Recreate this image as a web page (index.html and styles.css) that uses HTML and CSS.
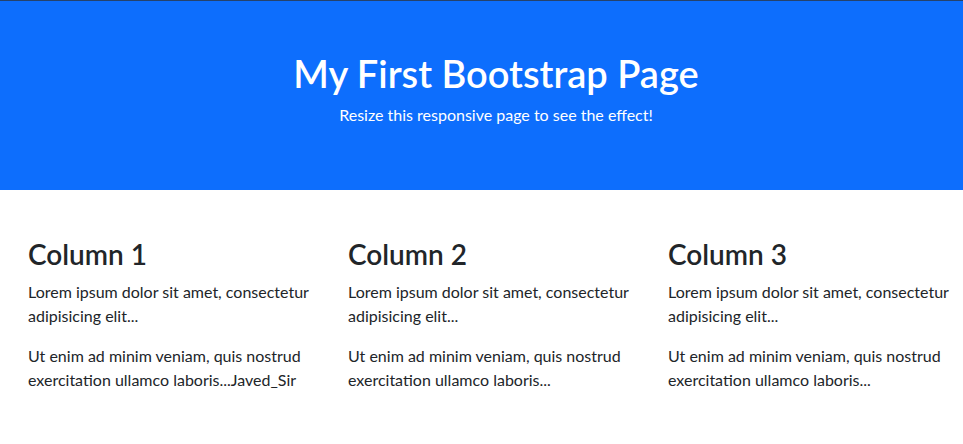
FILE: index.html
```html
<!DOCTYPE html>
<html lang="en">
<head>
<meta charset="utf-8">
<title>My First Bootstrap Page</title>
<link rel="stylesheet" href="styles.css">
</head>
<body>
<div class="page">
  <header class="hero">
    <h1 class="hero-title">My First Bootstrap Page</h1>
    <p class="hero-lead">Resize this responsive page to see the effect!</p>
  </header>
  <main class="container">
    <div class="row">
      <section class="col">
        <h3 class="col-title">Column 1</h3>
        <p>Lorem ipsum dolor sit amet, consectetur adipisicing elit...</p>
        <p>Ut enim ad minim veniam, quis nostrud exercitation ullamco laboris...Javed_Sir</p>
      </section>
      <section class="col">
        <h3 class="col-title">Column 2</h3>
        <p>Lorem ipsum dolor sit amet, consectetur adipisicing elit...</p>
        <p>Ut enim ad minim veniam, quis nostrud exercitation ullamco laboris...</p>
      </section>
      <section class="col">
        <h3 class="col-title">Column 3</h3>
        <p>Lorem ipsum dolor sit amet, consectetur adipisicing elit...</p>
        <p>Ut enim ad minim veniam, quis nostrud exercitation ullamco laboris...</p>
      </section>
    </div>
  </main>
</div>
</body>
</html>
```
FILE: styles.css
```css
html, body {
  margin: 0;
  padding: 0;
  overflow: hidden;
  background: #fff;
}
body {
  font-family: Lato, "Open Sans", sans-serif;
  font-size: 16px;
  line-height: 1.5;
  color: #212529;
}
.page {
  width: 992px;
  border-top: 1px solid #25426b;
}
.hero {
  background: #0d6efd;
  color: #fff;
  text-align: center;
  padding: 48px 48px 47px;
}
.hero-title {
  margin: 0 0 6px;
  font-size: 38px;
  font-weight: 600;
  line-height: 48px;
}
.hero-lead {
  margin: 0 0 16px;
  font-size: 16px;
  line-height: 24px;
}
.container {
  width: 960px;
  margin: 48px auto 0;
  box-sizing: border-box;
  padding: 0 12px;
}
.row {
  display: flex;
  margin: 0 -12px;
}
.col {
  flex: 1 1 0;
  padding: 0 12px;
  min-width: 0;
}
.col-title {
  margin: 0 0 8px;
  font-size: 28px;
  font-weight: 600;
  line-height: 1.2;
}
.col p {
  margin: 0 0 16px;
}
```
